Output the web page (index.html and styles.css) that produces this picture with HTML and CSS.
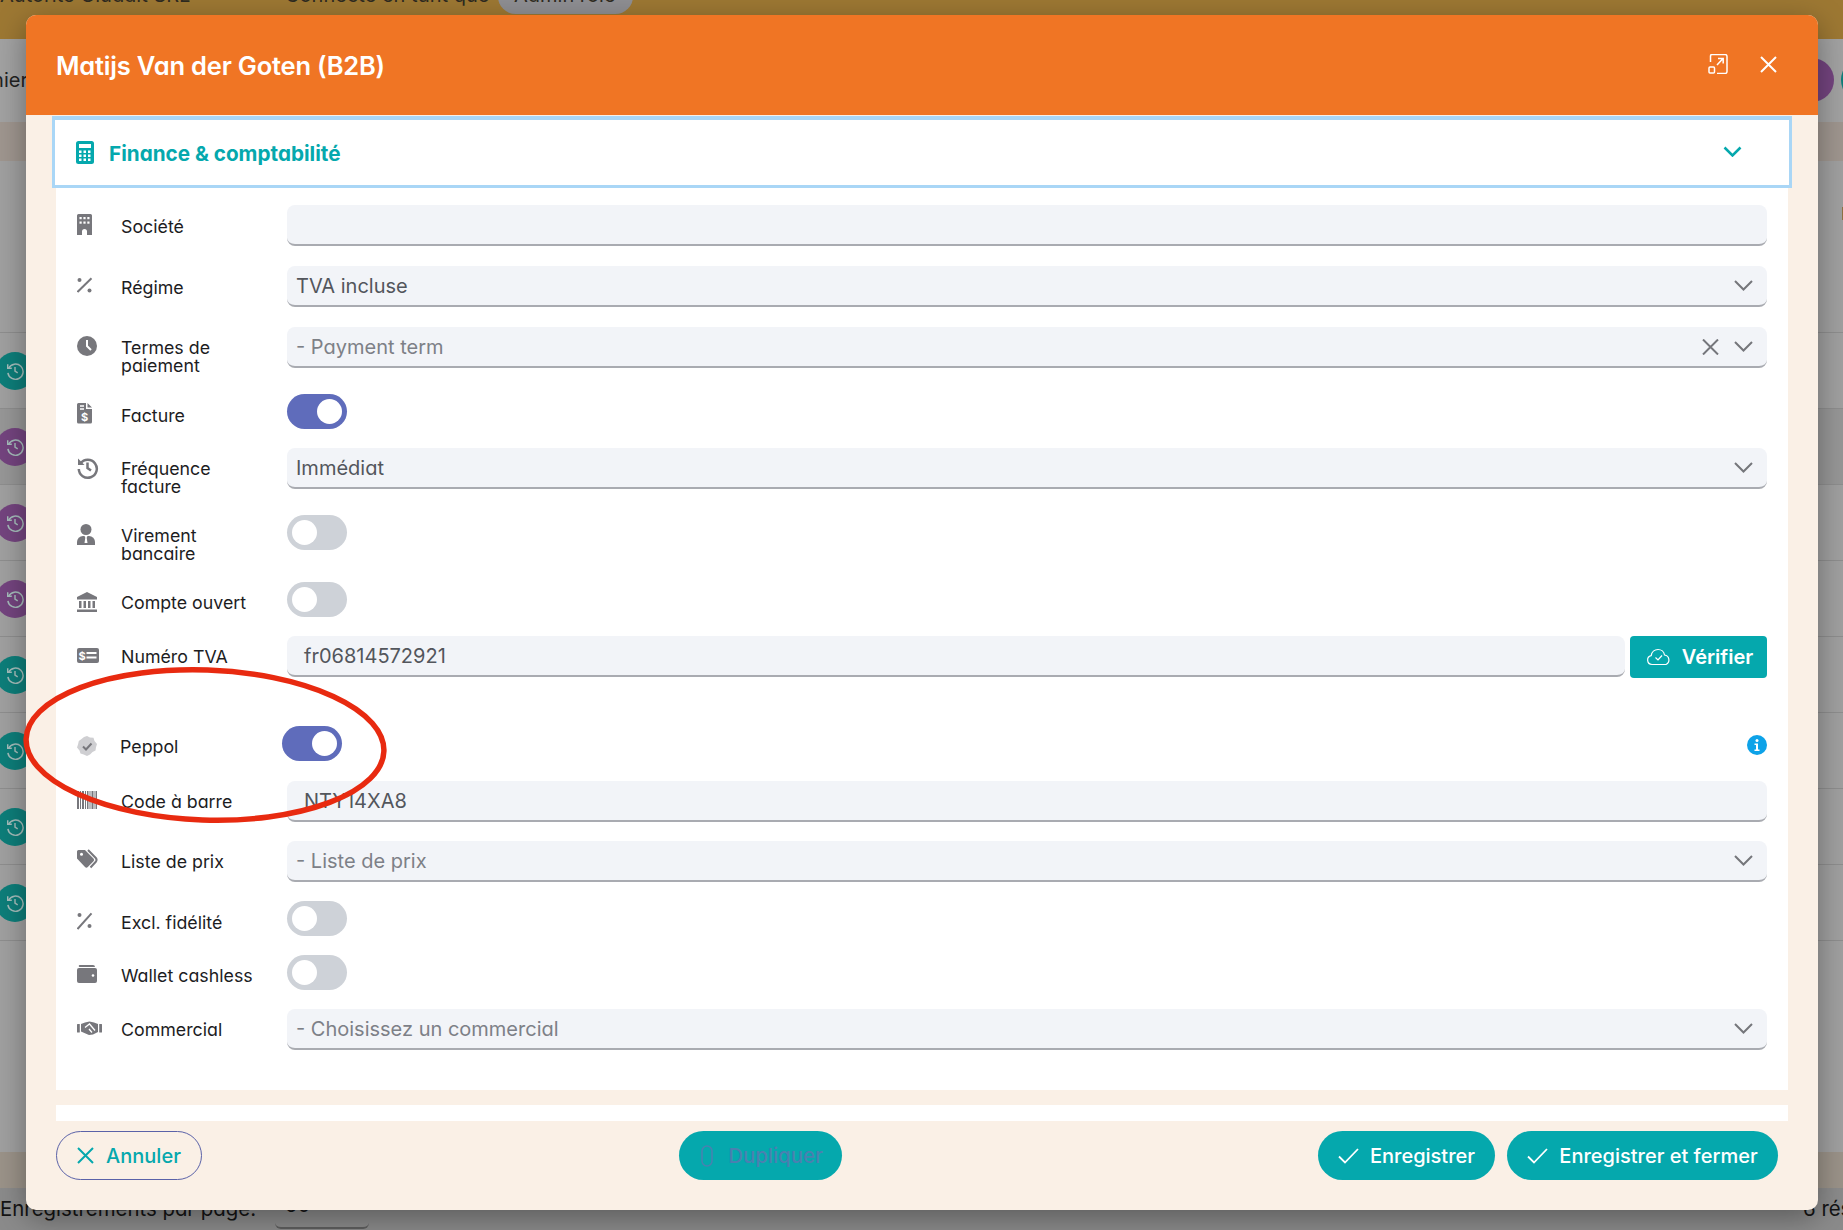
FILE: index.html
```html
<!DOCTYPE html>
<html lang="fr">
<head>
<meta charset="utf-8">
<title>Matijs Van der Goten (B2B)</title>
<link rel="stylesheet" href="styles.css">
</head>
<body>
<div class="app">
  <div class="topbar">
    <span class="top-company">Autorité Gluddit SRL</span>
    <span class="top-user">Connecté en tant que</span>
    <span class="top-pill">Admin role</span>
  </div>
  <div class="toolbar">
    <span class="toolbar-text">Fichier</span>
    <span class="toolbar-spacer"></span>
    <span class="bubble bubble-purple"></span>
    <span class="bubble bubble-teal"></span>
  </div>
  <div class="thead"></div>
  <div class="intro"><span class="intro-mark">F</span></div>
  <div class="rows">
    <div class="row"><span class="dot dot-teal"><svg viewBox="0 0 22 22"><path class="hist" d="M4 8a8.4 8.4 0 1 1-.8 5"/><path class="hist" d="M3 3.5V8h4.5M11 6.5V11l3 2"/></svg></span></div>
    <div class="row row-dark"><span class="dot dot-purple"><svg viewBox="0 0 22 22"><path class="hist" d="M4 8a8.4 8.4 0 1 1-.8 5"/><path class="hist" d="M3 3.5V8h4.5M11 6.5V11l3 2"/></svg></span></div>
    <div class="row"><span class="dot dot-purple"><svg viewBox="0 0 22 22"><path class="hist" d="M4 8a8.4 8.4 0 1 1-.8 5"/><path class="hist" d="M3 3.5V8h4.5M11 6.5V11l3 2"/></svg></span></div>
    <div class="row"><span class="dot dot-purple"><svg viewBox="0 0 22 22"><path class="hist" d="M4 8a8.4 8.4 0 1 1-.8 5"/><path class="hist" d="M3 3.5V8h4.5M11 6.5V11l3 2"/></svg></span></div>
    <div class="row"><span class="dot dot-teal"><svg viewBox="0 0 22 22"><path class="hist" d="M4 8a8.4 8.4 0 1 1-.8 5"/><path class="hist" d="M3 3.5V8h4.5M11 6.5V11l3 2"/></svg></span></div>
    <div class="row"><span class="dot dot-teal"><svg viewBox="0 0 22 22"><path class="hist" d="M4 8a8.4 8.4 0 1 1-.8 5"/><path class="hist" d="M3 3.5V8h4.5M11 6.5V11l3 2"/></svg></span></div>
    <div class="row"><span class="dot dot-teal"><svg viewBox="0 0 22 22"><path class="hist" d="M4 8a8.4 8.4 0 1 1-.8 5"/><path class="hist" d="M3 3.5V8h4.5M11 6.5V11l3 2"/></svg></span></div>
    <div class="row"><span class="dot dot-teal"><svg viewBox="0 0 22 22"><path class="hist" d="M4 8a8.4 8.4 0 1 1-.8 5"/><path class="hist" d="M3 3.5V8h4.5M11 6.5V11l3 2"/></svg></span></div>
  </div>
  <div class="table-gap"></div>
  <div class="tfoot"></div>
  <div class="pager">
    <span class="pager-label">Enregistrements par page:</span>
    <span class="pager-select">50</span>
    <span class="pager-spacer"></span>
    <span class="pager-count">6 résultats</span>
  </div>

  <section class="modal">
    <header class="modal-head">
      <h1 class="modal-title">Matijs Van der Goten (B2B)</h1>
      <svg class="head-expand" viewBox="0 0 20 20"><path d="M2.5 8V2a1.5 1.5 0 0 1 1.5-1.5h13A2 2 0 0 1 19 2.5v15a2 2 0 0 1-2 2H9M9 11l6-6.5M10 4.500h5.200V9.500"/><rect x="1" y="13" width="5.500" height="6" rx="1"/></svg>
      <svg class="head-close" viewBox="0 0 17 17"><path d="M1 1l15 15M16 1L1 16"/></svg>
    </header>

    <div class="modal-body">
      <div class="section-head">
        <svg class="calc" viewBox="0 0 18 23"><rect width="18" height="23" rx="2.500"/><rect class="w" x="3" y="3" width="12" height="4"/><g class="w"><rect x="3" y="9.500" width="2.500" height="2.500"/><rect x="7.500" y="9.500" width="2.500" height="2.500"/><rect x="12" y="9.500" width="2.500" height="2.500"/><rect x="3" y="13.500" width="2.500" height="2.500"/><rect x="7.500" y="13.500" width="2.500" height="2.500"/><rect x="12" y="13.500" width="2.500" height="2.500"/><rect x="3" y="17.500" width="2.500" height="2.500"/><rect x="7.500" y="17.500" width="2.500" height="2.500"/><rect x="12" y="17.500" width="2.500" height="2.500"/></g></svg>
        <span class="section-title">Finance &amp; comptabilité</span>
        <svg class="section-chev" viewBox="0 0 19 11"><path d="M1.500 1.500l8 8 8-8"/></svg>
      </div>

      <div class="form">
        <svg class="ic" viewBox="0 0 28 24"><path d="M0 2.500A1.500 1.500 0 0 1 1.500 1h12A1.500 1.500 0 0 1 15 2.500V22h-5v-3.500a2.500 2.500 0 0 0-5 0V22H0z"/><g class="w"><rect x="2.500" y="4" width="2.200" height="2.200"/><rect x="6.400" y="4" width="2.200" height="2.200"/><rect x="10.300" y="4" width="2.200" height="2.200"/><rect x="2.500" y="8.500" width="2.200" height="2.200"/><rect x="6.400" y="8.500" width="2.200" height="2.200"/><rect x="10.300" y="8.500" width="2.200" height="2.200"/></g></svg>
        <div class="label label-down">Société</div>
        <div class="input"></div>

        <svg class="ic" viewBox="0 0 28 24"><circle cx="2.500" cy="6" r="2"/><circle cx="12.500" cy="16.500" r="2"/><path class="ln" d="M14.500 4.300L.5 18"/></svg>
        <div class="label label-down">Régime</div>
        <div class="input select"><span class="val">TVA incluse</span><svg class="chev" viewBox="0 0 19 11"><path d="M1 1l8.500 8.500L18 1"/></svg></div>

        <svg class="ic" viewBox="0 0 28 24"><circle cx="10" cy="11" r="10"/><path class="wl" d="M10 5v6l4 4"/></svg>
        <div class="label">Termes de paiement</div>
        <div class="input select"><span class="ph">- Payment term</span><svg class="clear" viewBox="0 0 17 16"><path d="M1 .5l15 15M16 .5l-15 15"/></svg><svg class="chev" viewBox="0 0 19 11"><path d="M1 1l8.500 8.500L18 1"/></svg></div>

        <svg class="ic" viewBox="0 0 28 24"><path d="M1.500 1H9v6h6v13a1.500 1.500 0 0 1-1.500 1.500h-12A1.500 1.500 0 0 1 0 20V2.500A1.500 1.500 0 0 1 1.500 1zM10.500 1L15 5.500h-4.500z"/><path class="wl thin" d="M3 4h4M3 7h4"/><text class="glyph" x="7.500" y="19">$</text></svg>
        <div class="label label-down">Facture</div>
        <div class="toggle on"></div>

        <svg class="ic" viewBox="0 0 28 24"><path class="ln wide" d="M3.500 7.500A9 9 0 1 1 1.800 13"/><path d="M1 2.500v6.500h6.500z"/><path class="ln wide" d="M10.500 6.500V12l3.500 2.500"/></svg>
        <div class="label">Fréquence facture</div>
        <div class="input select"><span class="val">Immédiat</span><svg class="chev" viewBox="0 0 19 11"><path d="M1 1l8.500 8.500L18 1"/></svg></div>

        <svg class="ic" viewBox="0 0 28 24"><circle cx="9" cy="6.500" r="5.500"/><path d="M0 22v-3a6 6 0 0 1 6-6h6a6 6 0 0 1 6 6v3z"/><path class="w" d="M7.500 13h3l-.8 1.800.8 5.200H7.500l.8-5.200z"/></svg>
        <div class="label">Virement bancaire</div>
        <div class="toggle"></div>

        <svg class="ic" viewBox="0 0 28 24"><path d="M10 2l10 5v2.500H0V7z"/><rect x="2" y="11" width="2.500" height="7"/><rect x="6.500" y="11" width="2.500" height="7"/><rect x="11" y="11" width="2.500" height="7"/><rect x="15.500" y="11" width="2.500" height="7"/><rect y="19.500" width="20" height="2.500"/></svg>
        <div class="label">Compte ouvert</div>
        <div class="toggle"></div>

        <svg class="ic" viewBox="0 0 28 24"><rect y="4" width="22" height="15" rx="2"/><text class="glyph" x="5" y="16">$</text><path class="wl" d="M9.500 9h10M9.500 13.500h10"/></svg>
        <div class="label">Numéro TVA</div>
        <div class="control-pair">
          <div class="input text"><span class="val">fr06814572921</span></div>
          <button class="verify"><svg class="cloud" viewBox="0 0 26 18"><path d="M6 16.500a4.500 4.500 0 0 1-.8-8.900A7 7 0 0 1 12 1.500a6.500 6.500 0 0 1 6.500 5.500 5 5 0 0 1 1.500 9.500z"/><path d="M9.500 9.500l2.500 2.500 4-4.500"/></svg>Vérifier</button>
        </div>

        <svg class="ic" viewBox="0 0 28 24"><path class="badge" d="M10 2l3 1.500 3.500.3 1 3.200 2.500 3-1 3.200-.5 3.300-3 1.500-2.500 2.500L10 22l-3.300-1.500-3.200-1-1-3-2.500-3L1 10.500l.8-3.500 2.700-2L7 3z"/><path class="ln" d="M6 12.500l3 3 5.500-6"/></svg>
        <div class="label label-tight">Peppol</div>
        <div class="control-split">
          <div class="toggle on toggle-shift"></div>
          <svg class="info" viewBox="0 0 20 20"><circle cx="10" cy="10" r="10"/><circle class="w" cx="10" cy="5.500" r="1.500"/><path class="w" d="M7.500 8.500H11v6h1.500v1.500h-5v-1.500H9V10H7.500z"/></svg>
        </div>

        <svg class="ic" viewBox="0 0 28 24"><path d="M0 2h2v18H0zM3 2h1v18H3zM5 2h2v18H5zM8 2h1v18H8zM10 2h1.500v18H10zM12.500 2h1v18h-1zM14.500 2h2v18h-2zM17.500 2h1v18h-1zM19 2h1v18h-1z"/></svg>
        <div class="label">Code à barre</div>
        <div class="input text"><span class="val">NTY14XA8</span></div>

        <svg class="ic" viewBox="0 0 28 24"><path d="M1.500 1H8l8.500 8.500a2 2 0 0 1 0 2.800l-5.700 5.700a2 2 0 0 1-2.800 0L0 9.500V2.500A1.500 1.500 0 0 1 1.500 1z"/><circle class="w" cx="4.500" cy="5.300" r="1.500"/><path class="ln" d="M11 1l7.800 8a3 3 0 0 1 0 3.800L13.500 18.500"/></svg>
        <div class="label">Liste de prix</div>
        <div class="input select"><span class="ph">- Liste de prix</span><svg class="chev" viewBox="0 0 19 11"><path d="M1 1l8.500 8.500L18 1"/></svg></div>

        <svg class="ic" viewBox="0 0 28 24"><circle cx="2.500" cy="6" r="2"/><circle cx="12.500" cy="17" r="2"/><path class="ln" d="M14.500 4.300L.5 20"/></svg>
        <div class="label label-down">Excl. fidélité</div>
        <div class="toggle"></div>

        <svg class="ic" viewBox="0 0 28 24"><path d="M3 2h13a2 2 0 0 1 2 2H2.500a1 1 0 0 1 .5-2z"/><rect y="5" width="20" height="15" rx="2"/><circle class="w" cx="16" cy="12.500" r="1.300"/></svg>
        <div class="label">Wallet cashless</div>
        <div class="toggle"></div>

        <svg class="ic" viewBox="0 0 28 24"><rect y="7" width="2.800" height="8.500" rx=".5"/><rect x="22.200" y="7" width="2.800" height="8.500" rx=".5"/><path d="M4 7l4-1.500 4.500-1 4.500 1 4 1.500v8l-5 2.500-4 .5-3.500-1.500L4 14.500z"/><path class="wl thin" d="M8 10.500l4.500-3.500 5.500 6.500M12 12l3 3.500"/></svg>
        <div class="label">Commercial</div>
        <div class="input select"><span class="ph">- Choisissez un commercial</span><svg class="chev" viewBox="0 0 19 11"><path d="M1 1l8.500 8.500L18 1"/></svg></div>
      </div>

      <div class="next-section"></div>
    </div>

    <footer class="modal-foot">
      <button class="btn btn-ghost"><svg class="btn-x" viewBox="0 0 17 17"><path d="M1 1l15 15M16 1L1 16"/></svg>Annuler</button>
      <button class="btn btn-teal btn-disabled"><svg class="btn-copy" viewBox="0 0 20 24"><rect x="5" y="2" width="10" height="20" rx="5"/></svg>Dupliquer</button>
      <div class="foot-right">
        <button class="btn btn-teal btn-save"><svg class="btn-check" viewBox="0 0 21 16"><path d="M1 8.500l6 6L20 1"/></svg>Enregistrer</button>
        <button class="btn btn-teal btn-save-close"><svg class="btn-check" viewBox="0 0 21 16"><path d="M1 8.500l6 6L20 1"/></svg>Enregistrer et fermer</button>
      </div>
    </footer>
  </section>

  <svg class="annotation" viewBox="0 0 400 180"><ellipse cx="186" cy="83" rx="179" ry="75" transform="rotate(2 186 83)"/></svg>
</div>
</body>
</html>
```
FILE: styles.css
```css
* { box-sizing: border-box; }
html, body { margin: 0; padding: 0; }
body { font-family: Inter, "Liberation Sans", sans-serif; font-feature-settings: "cv11", "ss03"; color: #1d1d1f; overflow: hidden; }

.app { position: relative; width: 1843px; height: 1230px; overflow: hidden; background: #a0a0a0; }

.topbar { height: 39px; background: #9d7833; display: flex; align-items: flex-start; overflow: hidden; font-size: 20px; color: #2e2a20; }
.top-company { margin-top: -17px; width: 285px; white-space: nowrap; }
.top-user { margin-top: -17px; width: 213px; white-space: nowrap; }
.top-pill { margin-top: -21px; width: 135px; height: 35px; padding: 4px 16px; background: #8f8f93; border-radius: 18px; white-space: nowrap; }

.toolbar { height: 83px; display: flex; align-items: center; background: #a2a2a2; padding-bottom: 2px; }
.toolbar-text { font-size: 20px; margin-left: -36px; color: #222; }
.toolbar-spacer { flex: 1; }
.bubble { width: 44px; height: 44px; border-radius: 50%; flex: none; }
.bubble-purple { background: #74447f; margin-right: 7px; margin-left: 0; }
.bubble-teal { background: #0d7e7a; margin-right: -42px; }

.thead { height: 39px; background: #9f968f; }
.intro { height: 172px; display: flex; justify-content: flex-end; padding-top: 43px; border-bottom: 1px solid #8e8e8e; }
.intro-mark { font-size: 18px; font-weight: 700; margin-right: -9px; line-height: 20px; color: #1b1b1b; }

.row { height: 76px; display: flex; align-items: center; border-bottom: 1px solid #8e8e8e; }
.row-dark { background: #979797; }
.dot { width: 38px; height: 38px; margin-left: -4px; border-radius: 50%; display: flex; align-items: center; justify-content: center; }
.dot svg { width: 20px; height: 20px; }
.dot-teal { background: #0d7e7a; }
.dot-purple { background: #74447f; }
.hist { fill: none; stroke: #a5bdbb; stroke-width: 1.600; }

.table-gap { height: 211px; }
.tfoot { height: 36px; background: #9b9389; }
.pager { height: 42px; background: #8b8b8b; display: flex; align-items: center; font-size: 20.400px; color: #141414; padding-bottom: 2px; }
.pager-label { width: 275px; white-space: nowrap; }
.pager-select { width: 94px; padding-left: 10px; height: 42px; line-height: 36px; border-bottom: 2px solid #5e5e5e; border-radius: 0 0 6px 6px; }
.pager-spacer { flex: 1; }
.pager-count { width: 40px; white-space: nowrap; overflow: hidden; }

.modal { position: absolute; left: 26px; top: 15px; width: 1792px; height: 1195px; background: #faf0e6; border-radius: 10px; box-shadow: 0 8px 30px rgba(0, 0, 0, .35); display: flex; flex-direction: column; overflow: hidden; }
.modal-head { height: 100px; flex: none; background: #f07524; display: flex; align-items: center; padding: 0 41px 2px 30px; }
.modal-title { flex: 1; margin: 2px 0 0; font-size: 25.500px; font-weight: 600; color: #fff; letter-spacing: -.2px; }
.head-expand { width: 20px; height: 20px; fill: none; stroke: #fff; stroke-width: 1.500; margin-right: 32px; }
.head-close { width: 17px; height: 17px; fill: none; stroke: #fff; stroke-width: 2; }

.modal-body { flex: 1; min-height: 0; padding: 1px 30px 0; display: flex; flex-direction: column; }
.section-head { height: 72px; margin: 0 -4px; background: #fff; border: 3px solid #a9d6f6; border-top-width: 4px; display: flex; align-items: center; padding: 0 47px 0 21px; }
.calc { width: 18px; height: 23px; fill: #05a8ad; }
.calc .w { fill: #fff; }
.section-title { flex: 1; margin: 1px 0 0 15px; font-size: 20.700px; font-weight: 700; color: #05a8ad; }
.section-chev { width: 19px; height: 11px; fill: none; stroke: #05a8ad; stroke-width: 2.500; margin-top: -3px; }

.form { background: #fff; padding: 17px 21px 0; display: grid; grid-template-columns: 44px 166px 1fr; grid-template-rows: 61px 61px 67px 54px 67px 67px 54px 90px 55px 60px 60px 54px 54px 81px; }
.ic { width: 28px; height: 24px; margin-top: 8px; fill: #77777c; }
.ic .w { fill: #fff; }
.ln { fill: none; stroke: #77777c; stroke-width: 2; }
.ln.wide { stroke-width: 2.500; }
.wl { fill: none; stroke: #fff; stroke-width: 2; }
.wl.thin { stroke-width: 1.300; }
.badge { fill: #cfcfd2; }
.glyph { fill: #fff; font-size: 11px; font-weight: 700; text-anchor: middle; }
.label { padding: 12px 28px 0 0; font-size: 17.800px; line-height: 18px; color: #1d1d1f; }
.label-down { padding-top: 13px; }
.label-tight { margin-left: -1px; }

.input { height: 41px; background: #f2f4f8; border-bottom: 2px solid #a9abb1; border-radius: 8px; display: flex; align-items: center; font-size: 20px; }
.input.select { padding: 0 14px 0 9px; }
.input.text { padding: 0 14px 0 17px; flex: 1; }
.val { flex: 1; color: #53565c; }
.ph { flex: 1; color: #7d8087; }
.chev { width: 19px; height: 11px; fill: none; stroke: #75767b; stroke-width: 2; }
.clear { width: 17px; height: 16px; fill: none; stroke: #75767b; stroke-width: 2; margin-right: 15px; }

.toggle { width: 60px; height: 35px; border-radius: 18px; background: #ced2d8; position: relative; }
.toggle::after { content: ""; position: absolute; top: 5px; left: 5px; width: 25px; height: 25px; border-radius: 50%; background: #fff; }
.toggle.on { background: #5f6cbb; }
.toggle.on::after { left: 30px; }
.toggle-shift { margin-left: -5px; }

.control-pair { display: flex; align-items: flex-start; gap: 5px; }
.verify { width: 137px; height: 42px; flex: none; background: #05a8ad; border: 0; border-radius: 4px; color: #fff; font: inherit; font-size: 20px; font-weight: 600; display: flex; align-items: center; justify-content: center; gap: 10px; padding: 0 0 0 2px; }
.cloud { width: 26px; height: 18px; fill: none; stroke: #fff; stroke-width: 1.200; }
.control-split { display: flex; justify-content: space-between; align-items: flex-start; }
.info { width: 20px; height: 20px; margin-top: 9px; fill: #0da2e8; }
.info .w { fill: #fff; }

.next-section { height: 16px; margin-top: 15px; background: #fff; flex: none; }

.modal-foot { height: 89px; flex: none; padding: 10px 40px 0 30px; display: flex; justify-content: space-between; align-items: flex-start; }
.foot-right { display: flex; gap: 12px; }
.btn { height: 49px; border-radius: 25px; display: flex; align-items: center; justify-content: center; font: inherit; font-size: 20px; font-weight: 500; padding: 0; }
.btn-ghost { width: 146px; background: transparent; border: 1px solid #5a62a8; color: #05a8ad; gap: 12px; }
.btn-teal { background: #05a8ad; border: 0; color: #fff; gap: 11px; }
.btn-disabled { width: 163px; color: #4a80b0; font-size: 20.400px; }
.btn-save { width: 177px; }
.btn-save-close { width: 271px; }
.btn-x { width: 17px; height: 17px; fill: none; stroke: #05a8ad; stroke-width: 2; }
.btn-check { width: 21px; height: 16px; fill: none; stroke: #fff; stroke-width: 1.800; }
.btn-copy { width: 20px; height: 24px; fill: none; stroke: #4a80b0; stroke-width: 1.500; }

.annotation { position: absolute; left: 19px; top: 662px; width: 400px; height: 180px; pointer-events: none; }
.annotation ellipse { fill: none; stroke: #e82a10; stroke-width: 5.500; }
```
